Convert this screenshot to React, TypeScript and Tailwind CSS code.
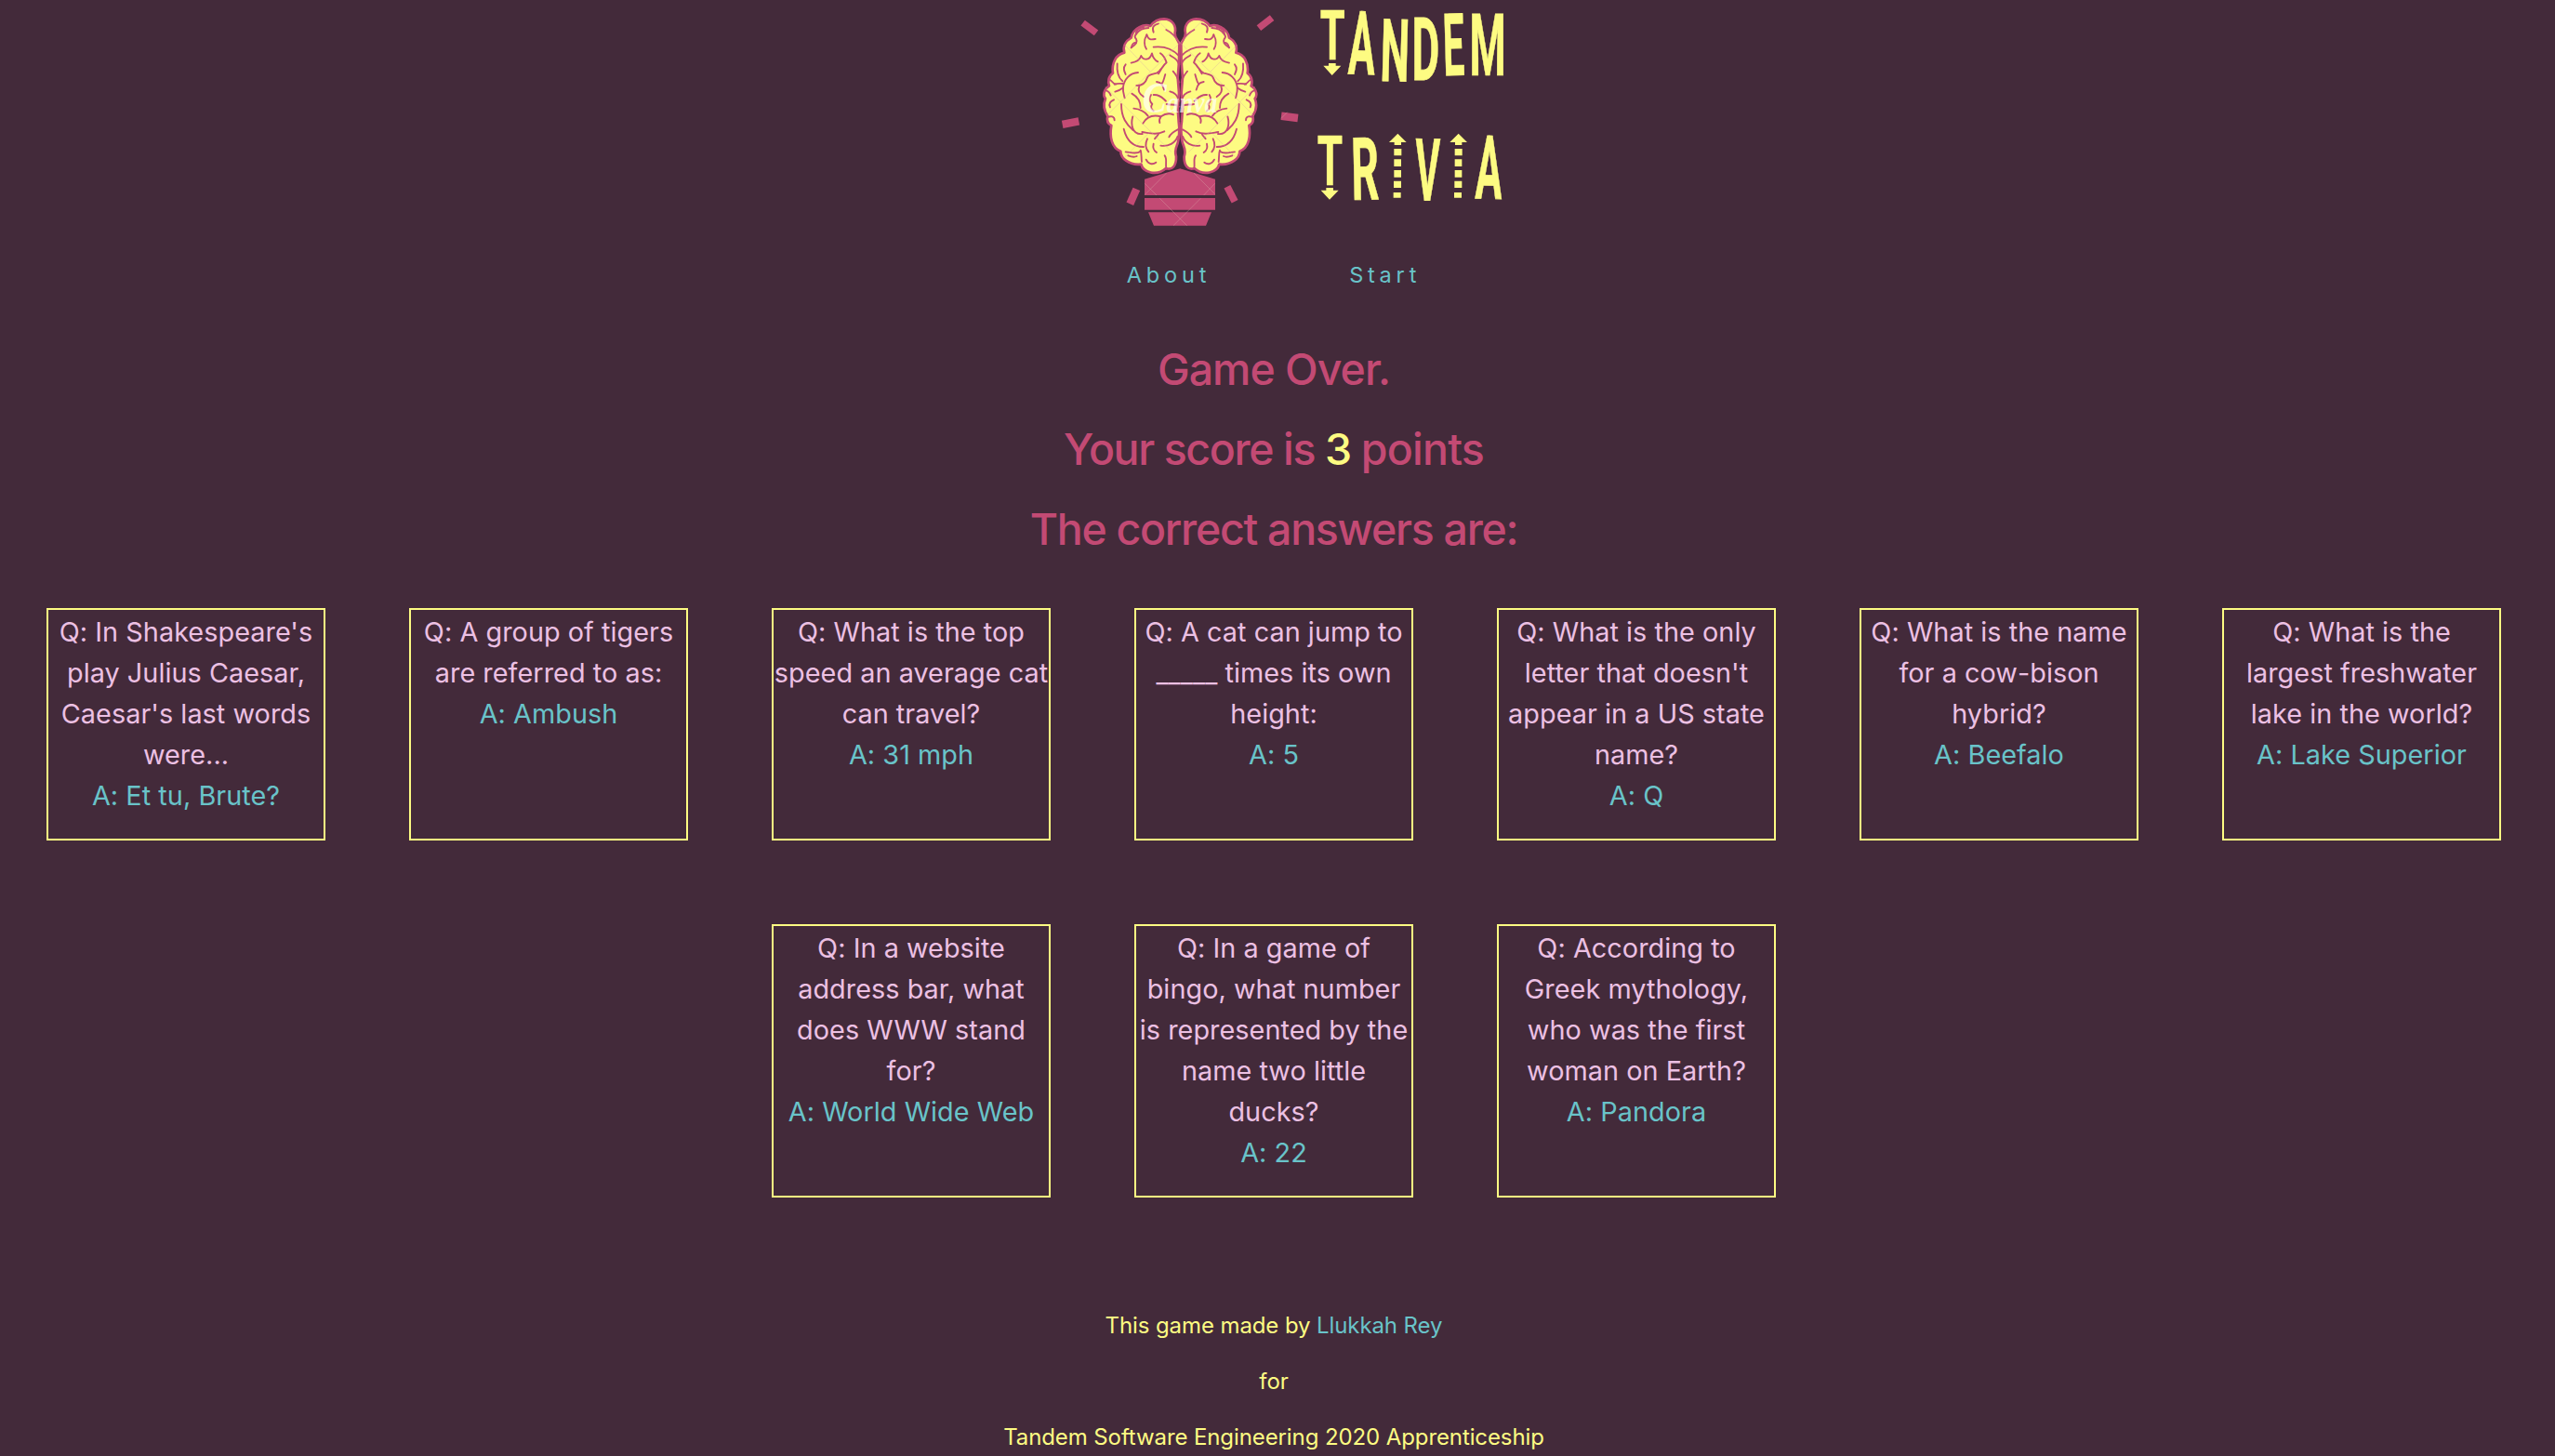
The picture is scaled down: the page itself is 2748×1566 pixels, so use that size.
type Glyph = { ch: string; x: number; top: number; w: number; h: number; ink: [number, number]; r?: number };

const INK: Record<string, [number, number]> = {
  T: [2, 57.5],
  A: [0.5, 66],
  N: [5.7, 58.8],
  D: [5.7, 54.5],
  E: [5.7, 48],
  M: [5.7, 76],
  R: [5.7, 56],
  V: [0.5, 65.5],
};

// Title letters, measured on a grid three times finer than a pixel.
const LETTERS: Glyph[] = [
  { ch: 'T', x: 62, top: 36, w: 75, h: 157, ink: INK.T },
  { ch: 'A', x: 152, top: 37, w: 85, h: 203, ink: INK.A, r: 1.5 },
  { ch: 'N', x: 262, top: 62, w: 78, h: 200, ink: INK.N, r: 1.5 },
  { ch: 'D', x: 363, top: 58, w: 75, h: 200, ink: INK.D },
  { ch: 'E', x: 463, top: 44, w: 59, h: 199, ink: INK.E, r: -1.5 },
  { ch: 'M', x: 549, top: 45, w: 102, h: 199, ink: INK.M },
  { ch: 'T', x: 53, top: 437, w: 76, h: 159, ink: INK.T },
  { ch: 'R', x: 168, top: 444, w: 78, h: 200, ink: INK.R, r: -1.2 },
  { ch: 'V', x: 367, top: 448, w: 80, h: 199, ink: INK.V, r: 0.8 },
  { ch: 'A', x: 562, top: 438, w: 85, h: 203, ink: INK.A, r: 1.5 },
];

function Letter({ ch, x, top, w, h, ink, r = 0 }: Glyph) {
  const cx = x + w / 2;
  const cy = top + h / 2;
  return (
    <text
      className="font-bold"
      fontFamily="Roboto, sans-serif"
      fontSize="100"
      stroke="#fdfb82"
      strokeWidth="0.8"
      transform={`rotate(${r} ${cx} ${cy}) translate(${x} ${top + h}) scale(${w / ink[1]} ${h / 71.1}) translate(${-ink[0]} 0)`}
    >
      {ch}
    </text>
  );
}

const HEMISPHERE =
  'M445,142 C441,128 430,122 431,106 C436,84 424,62 396,61 C376,61 362,70 352,84 C334,76 296,88 290,122 C272,132 262,150 268,170 C240,176 226,205 231,236 C216,246 214,266 219,277 C198,290 200,312 207,318 C198,340 206,362 214,374 C210,390 215,400 226,405 C220,440 226,478 256,488 C256,510 282,534 322,530 C328,556 372,570 402,543 C422,550 436,535 435,505 C431,492 432,482 437,470 C446,450 446,410 443,392 L440,350 L444,300 L440,250 L444,200 Z';

const FOLDS = [
  'M362,152 C395,148 425,160 444,180',
  'M403,96 C420,105 435,120 443,136',
  'M378,76 C362,80 356,88 362,104',
  'M340,112 C330,130 332,148 339,158',
  'M340,112 C345,130 355,128 368,126',
  'M346,90 C330,90 314,98 306,110 C302,114 300,120 306,126 C312,136 302,146 290,154',
  'M330,88 C312,90 305,100 305,112',
  'M306,138 C300,136 292,142 290,154',
  'M290,203 C305,200 318,195 322,180 C328,194 350,198 357,172 C360,188 366,194 376,199',
  'M384,172 C396,180 400,190 404,202 C390,213 388,228 372,236 C358,240 346,240 342,250 C338,262 330,277 307,276',
  'M386,224 L378,238',
  'M316,278 C310,294 320,306 330,312',
  'M400,240 C396,250 396,262 388,272',
  'M372,264 C386,266 392,272 396,290',
  'M245,205 C243,228 248,250 262,262',
  'M272,208 C262,220 268,230 272,240',
  'M312,234 C285,236 268,255 264,280 C262,295 266,305 269,316',
  'M236,272 C246,268 254,270 264,270',
  'M222,258 C230,262 228,268 240,272',
  'M208,292 C218,294 222,302 224,308',
  'M262,284 C252,292 244,294 238,296',
  'M222,346 C216,334 224,326 234,322',
  'M214,378 C224,374 236,374 236,388',
  'M292,302 C310,312 320,326 320,348',
  'M258,336 C258,380 275,402 296,420',
  'M295,376 C288,400 292,436 326,432',
  'M266,416 C275,452 296,474 330,474',
  'M298,350 C318,352 334,360 344,374',
  'M328,398 C340,376 362,370 386,376 C400,366 412,364 426,370',
  'M386,376 C380,384 380,390 382,396',
  'M325,426 C352,430 372,436 397,424',
  'M378,432 C376,438 370,442 366,448',
  'M440,418 C428,424 418,430 412,442',
  'M385,470 C410,474 432,462 440,440',
  'M342,448 C334,464 336,478 346,490',
  'M362,464 C358,480 364,486 372,492',
  'M272,490 C285,490 305,500 320,488',
  'M320,485 C324,496 322,508 324,522',
  'M280,502 C290,506 300,508 308,504',
  'M338,515 C345,530 360,532 370,524',
  'M398,502 C408,515 398,530 404,545',
  'M415,178 C424,186 438,186 444,208',
  'M425,230 C434,240 440,246 444,266',
  'M415,295 C430,298 440,308 444,326',
  'M404,336 C422,340 432,334 444,344',
  'M354,306 C346,318 350,328 358,336 C352,344 354,352 362,358',
  'M362,306 C384,304 392,318 402,326',
];

function Hemisphere() {
  return (
    <g strokeLinecap="round" strokeLinejoin="round" stroke="#c34a74">
      <path d={HEMISPHERE} fill="#fdfb82" strokeWidth="8" />
      <g fill="none" strokeWidth="5.6">
        {FOLDS.map((d) => (
          <path key={d} d={d} />
        ))}
      </g>
    </g>
  );
}

const RAYS: [number, number, number, number, number][] = [
  [155.5, 90, 54, 22, 37],
  [723, 74, 54, 22, -38],
  [94.5, 396.5, 54, 25, -11],
  [801, 377.5, 54, 26, 7],
  [296.5, 634, 52, 25, -66],
  [612, 626, 54, 23, 63],
];

function Logo() {
  return (
    <svg className="block h-[260px] w-[500px] overflow-visible" viewBox="1120 0 500 260" role="img" aria-label="Tandem Trivia">
      <g transform="translate(1120 0) scale(0.33333)">
        <Hemisphere />
        <g transform="translate(896 0) scale(-1 1)">
          <Hemisphere />
        </g>
        <g fill="#c34a74">
          {RAYS.map(([cx, cy, w, h, r]) => (
            <rect key={cx} x={cx - w / 2} y={cy - h / 2} width={w} height={h} transform={`rotate(${r} ${cx} ${cy})`} />
          ))}
          <path d="M333,578 L448,544 L561,578 V630 H333 Z" />
          <path d="M333,639 H561 V677 H333 Z" />
          <path d="M345,685 H549 L531,728 H363 Z" />
        </g>
        <g stroke="#d9a9a9" strokeOpacity="0.45" strokeWidth="2.5" fill="none">
          <path d="M268,144 L352,232 L448,138 L545,232 L632,144" />
          <path d="M380,70 L448,138 L516,70" />
          <path d="M352,232 L210,374 M545,232 L686,374" />
          <path d="M206,280 L352,424 L270,506 M690,280 L545,424 L626,506" />
          <path d="M352,424 L420,490 M545,424 L476,490" />
          <path d="M404,558 L334,628 M334,592 L372,630 M492,558 L560,626 M560,592 L524,630" />
          <path d="M382,640 L470,728 M514,640 L426,728" />
          <path d="M774,382 L794,362" />
        </g>
        <text
          x="326"
          y="362"
          fill="#ffffff"
          fillOpacity="0.66"
          fontFamily="Liberation Serif, serif"
          fontStyle="italic"
          fontWeight="700"
          fontSize="96"
          textLength="242"
          lengthAdjust="spacingAndGlyphs"
        >
          <tspan fontSize="138">C</tspan>anva
        </text>
      </g>
      <g transform="translate(1400 0) scale(0.33333)" fill="#fdfb82">
        {LETTERS.map((l) => (
          <Letter key={`${l.ch}${l.x}`} {...l} />
        ))}
        <path d="M87,204 H110 V212 H127 L98,243 L70,212 H87 Z" />
        <path d="M79,606 H102 V614 H119 L90,644 L62,614 H79 Z" />
        {[310, 506].map((cx) => (
          <g key={cx} transform={`translate(${cx} 0)`}>
            <path d="M0,431 L28,459 H11 V468 H-11 V459 H-28 Z" />
            <path d="M-12,480 H12 V502 H-12 Z M-12,514 H11 V537 H-12 Z M-12,549 H11 V572 H-12 Z M-13,584 H11 V606 H-13 Z M-14,621 H10 V638 H-14 Z" />
          </g>
        ))}
      </g>
    </svg>
  );
}

const CARDS: [string, string][] = [
  ["In Shakespeare's play Julius Caesar, Caesar's last words were...", 'Et tu, Brute?'],
  ['A group of tigers are referred to as:', 'Ambush'],
  ['What is the top speed an average cat can travel?', '31 mph'],
  ['A cat can jump to _____ times its own height:', '5'],
  ["What is the only letter that doesn't appear in a US state name?", 'Q'],
  ['What is the name for a cow-bison hybrid?', 'Beefalo'],
  ['What is the\nlargest freshwater\nlake in the world?', 'Lake Superior'],
  ['In a website address bar, what does WWW stand for?', 'World Wide Web'],
  ['In a game of bingo, what number is represented by the name two little ducks?', '22'],
  ['According to Greek mythology, who was the first woman on Earth?', 'Pandora'],
];

export default function App() {
  return (
    <div className="h-[1566px] overflow-hidden bg-[#432a3a] pr-2 text-center font-[Inter,sans-serif]">
      <header className="flex flex-col items-center">
        <Logo />
        <nav className="flex gap-[149px] pt-px text-[23.5px] leading-[70px] tracking-[4.8px] text-[#69c3c9]">
          <a href="#about">About</a>
          <a href="#start">Start</a>
        </nav>
      </header>
      <main>
        <div className="mt-[23px] text-[46.5px] leading-[86px] font-medium text-[#c34a74]">
          <h2 className="tracking-[-1px]">Game Over.</h2>
          <h2 className="tracking-[-1.4px]">
            Your score is <span className="text-[#fdfb82]">3</span> <span className="tracking-[-0.8px]">points</span>
          </h2>
          <h2 className="tracking-[-1.3px]">The correct answers are:</h2>
        </div>
        <section className="mt-[42px] flex flex-wrap justify-center gap-[90px] px-[50px]">
          {CARDS.map(([q, a]) => (
            <article
              key={q}
              className="w-[300px] border-2 border-[#fdfb82] pt-[2px] pb-6 text-[28.8px] leading-[44px] tracking-[0.05px]"
            >
              <p className="whitespace-pre-line text-[#ecc0e3]">Q: {q}</p>
              <p className="text-[#69c3c9]">A: {a}</p>
            </article>
          ))}
        </section>
      </main>
      <footer className="mt-[108px] text-[24px] leading-[60px] tracking-[-0.1px] text-[#fdfb82]">
        <p>
          This game made by <a href="#author" className="text-[#69c3c9]">Llukkah Rey</a>
        </p>
        <p>for</p>
        <p>Tandem Software Engineering 2020 Apprenticeship</p>
      </footer>
    </div>
  );
}
